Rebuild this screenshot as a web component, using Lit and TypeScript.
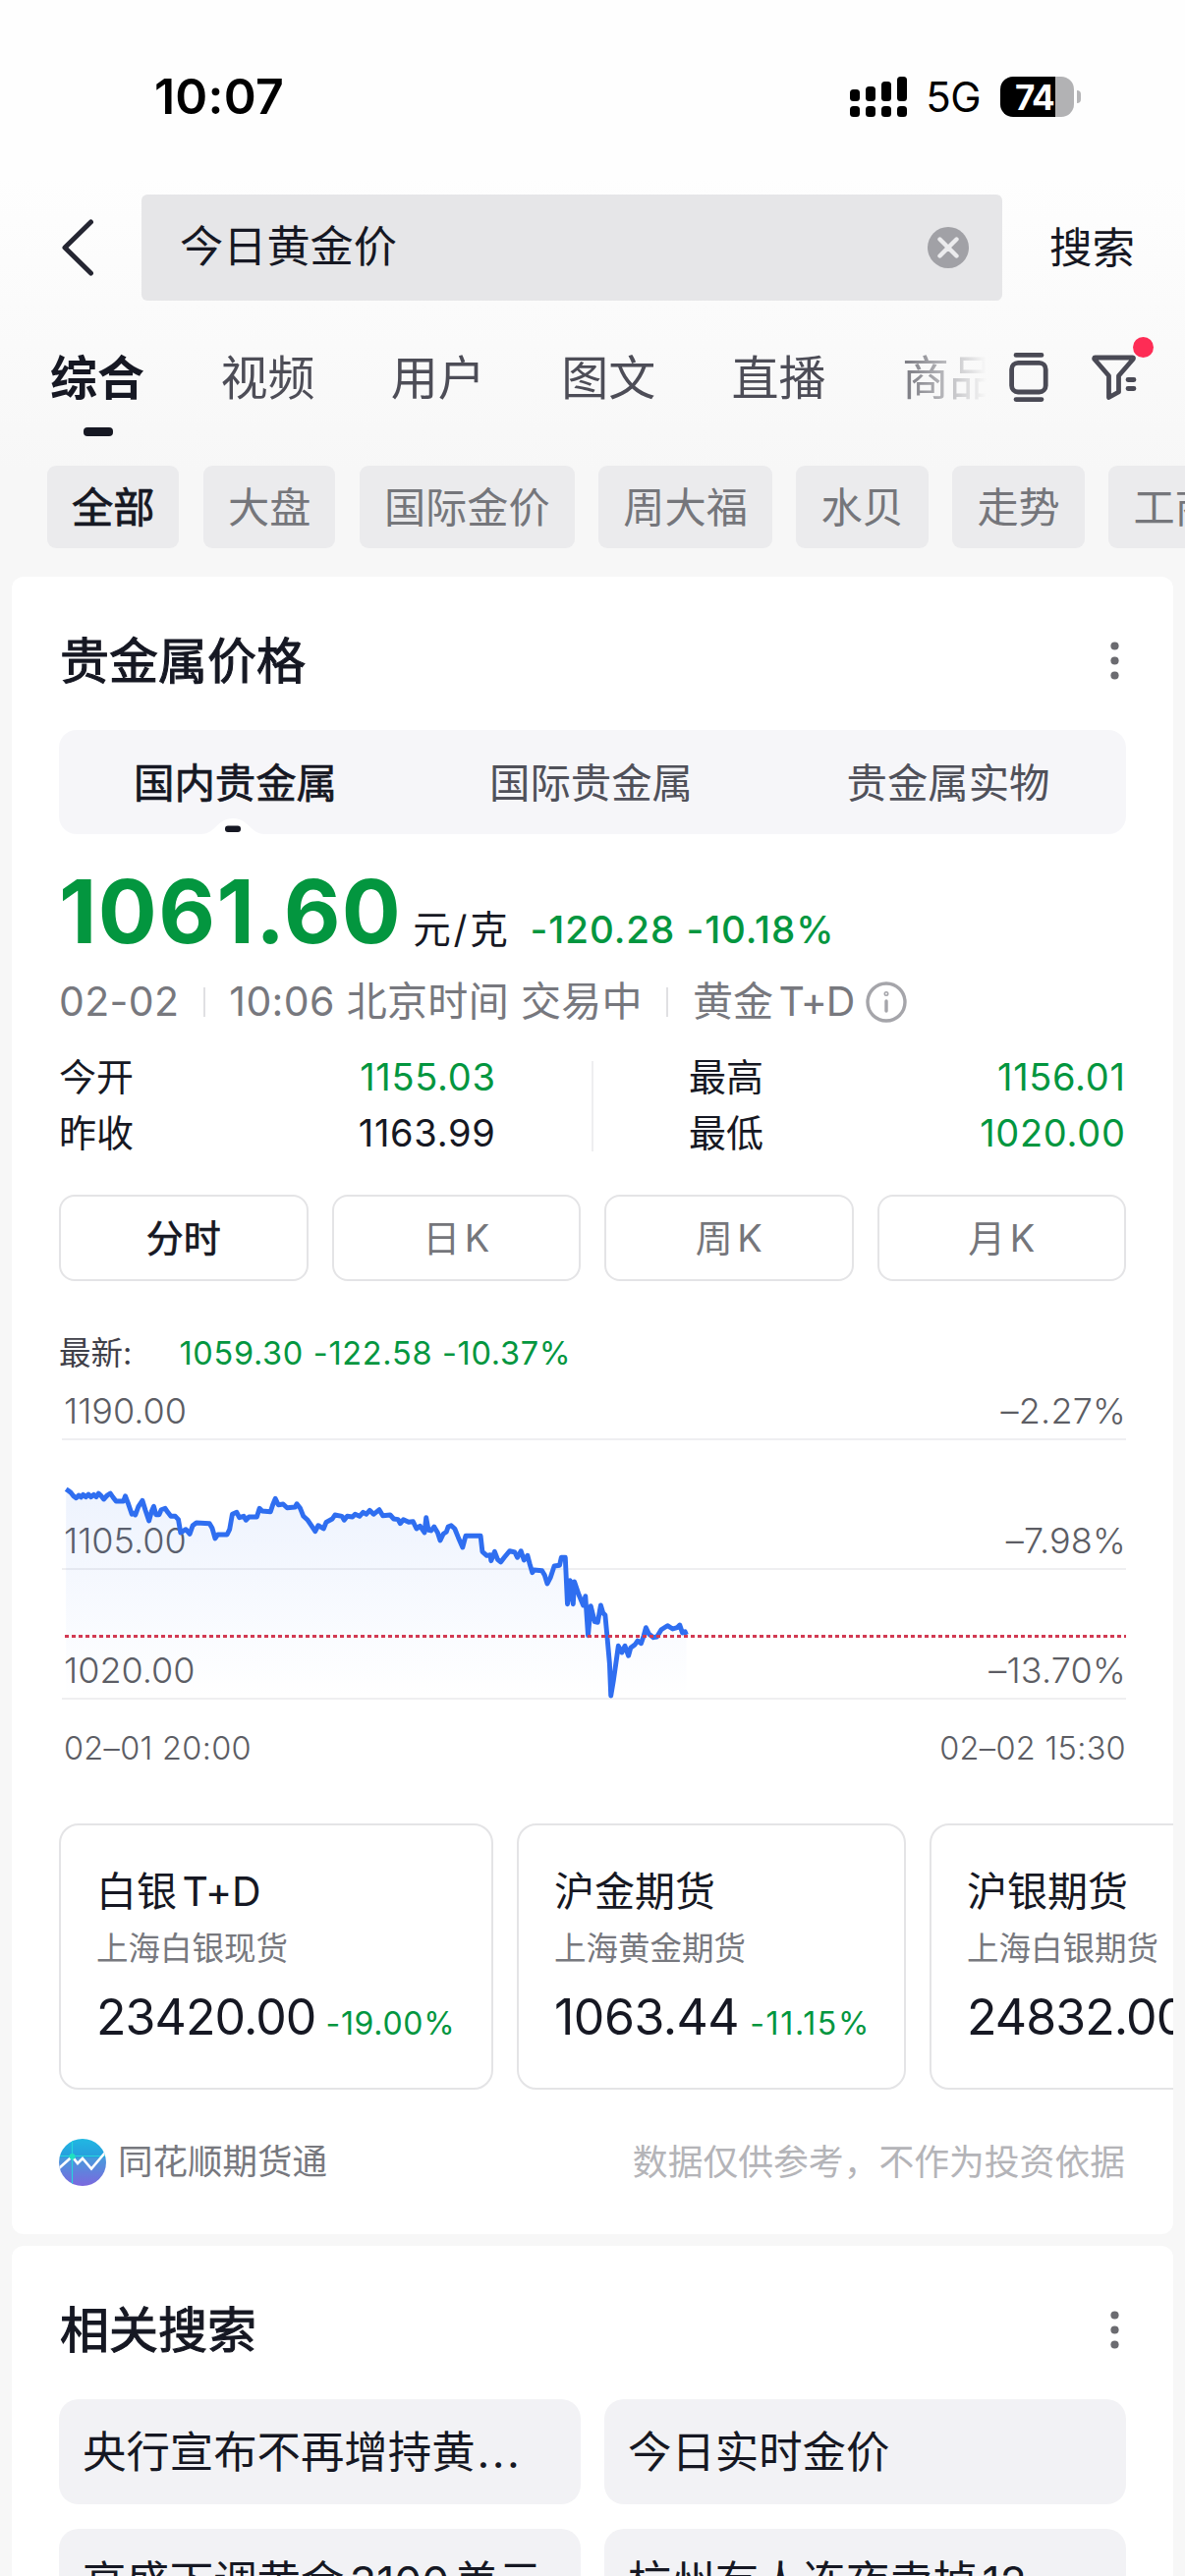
import { LitElement, html, css, svg } from "lit";
import { customElement, property } from "lit/decorators.js";
import { classMap } from "lit/directives/class-map.js";

const TABS = ["综合", "视频", "用户", "图文", "直播", "商品"];
const FILTERS = ["全部", "大盘", "国际金价", "周大福", "水贝", "走势", "工商银行"];
const METALS = ["国内贵金属", "国际贵金属", "贵金属实物"];
const PERIODS = ["分时", "日 K", "周 K", "月 K"];
const AXIS = [
  ["1190.00", "–2.27%"],
  ["1105.00", "–7.98%"],
  ["1020.00", "–13.70%"],
];
const FUTURES = [
  { name: "白银 T+D", sub: "上海白银现货", price: "23420.00", change: "-19.00%" },
  { name: "沪金期货", sub: "上海黄金期货", price: "1063.44", change: "-11.15%" },
  { name: "沪银期货", sub: "上海白银期货", price: "24832.00", change: "-16.00%" },
];
const RELATED = ["央行宣布不再增持黄", "今日实时金价", "高盛下调黄金 3100 美元", "杭州有人连夜卖掉 12"];

/* Minute series: pairs of time and value offsets, scaled to the plot below. */
const SERIES =
  "61,347 66,352 72,358 78,368 84,374 90,366 95,372 100,364 106,371 112,363 118,371 124,364 130,371 135,360 140,366 147,378 155,366 162,360 168,372 175,384 192,384 196,368 203,392 211,424 217,420 219,426 226,400 235,382 242,412 250,444 256,415 261,400 266,425 273,425 278,410 287,406 293,418 300,430 310,430 317,440 322,480 334,470 343,484 350,458 358,450 388,452 394,466 401,498 407,486 428,486 434,470 440,424 450,418 456,434 466,430 471,442 478,432 496,432 502,406 508,414 527,416 532,396 538,376 545,395 556,393 565,404 583,402 587,392 595,406 602,430 612,442 620,458 629,476 636,458 648,468 654,448 668,438 674,426 690,430 695,442 702,430 714,432 720,424 730,430 738,418 745,424 753,412 762,424 775,410 783,428 800,426 808,438 818,440 823,452 830,440 842,448 852,446 860,468 868,460 878,480 882,434 887,472 893,474 900,462 908,480 914,504 921,484 928,478 932,462 939,458 947,468 955,494 965,525 972,490 1006,490 1010,538 1020,550 1028,548 1030,566 1038,538 1045,562 1052,570 1060,556 1072,536 1084,540 1090,556 1098,536 1105,564 1113,550 1118,575 1124,602 1128,594 1146,596 1152,610 1158,636 1165,618 1174,582 1186,580 1190,556 1199,556 1204,698 1210,626 1217,698 1220,630 1230,670 1240,702 1245,674 1251,794 1257,704 1266,752 1273,754 1280,702 1285,725 1290,732 1294,790 1300,880 1303,978 1309,930 1314,884 1320,826 1328,846 1335,826 1343,856 1348,832 1358,822 1364,810 1372,818 1378,794 1383,770 1390,790 1400,800 1408,798 1418,776 1432,764 1444,774 1454,770 1460,762 1466,786 1472,782 1475,792";

const POINTS = SERIES.split(" ")
  .map((p) => {
    const [x, y] = p.split(",").map(Number);
    return `${(x / 2.24 - 20).toFixed(1)},${(y / 3 - 2).toFixed(1)}`;
  })
  .join(" ");

const base = css`
  * { box-sizing: border-box; }
  svg { display: block; flex: none; }
`;

@customElement("status-bar")
class StatusBar extends LitElement {
  static styles = [base, css`
    :host { display: flex; align-items: center; height: 196px; padding: 0 106px 0 157px; color: #000; }
    .time { flex: 1; font-size: 50px; font-weight: 600; letter-spacing: 0.2px; }
    .net { font-size: 42px; margin: 2px 20px 0 19px; letter-spacing: -0.5px; }
    .battery { width: 75px; height: 41px; border-radius: 13px; overflow: hidden; padding-left: 15px;
      background: linear-gradient(90deg, #000 56px, #b2b2b4 56px); color: #fff;
      font: 700 35px/42px Inter, sans-serif; letter-spacing: -1.2px; }
    .nub { width: 4px; height: 13px; margin-left: 3px; border-radius: 0 5px 5px 0; background: #b5b5b7; }
  `];
  render() {
    return html`
      <div class="time">10:07</div>
      <svg width="58" height="41" viewBox="0 0 58 41">
        ${[13, 10, 5, 0].map((t, i) => svg`
          <rect x=${i * 16} y=${t} width="10" height=${25 - t} rx="3.5"></rect>
          <rect x=${i * 16} y="30" width="10" height="11" rx="3.5"></rect>`)}
      </svg>
      <div class="net">5G</div>
      <div class="battery">74</div>
      <div class="nub"></div>`;
  }
}

@customElement("search-header")
class SearchHeader extends LitElement {
  static styles = [base, css`
    :host { display: block; color: #161823; }
    .search { display: flex; align-items: center; height: 108px; margin-top: 2px; padding-left: 60px; }
    .box { display: flex; align-items: center; justify-content: space-between; width: 876px; height: 108px;
      margin-left: 46px; padding: 0 34px 0 39px; border-radius: 6px; background: #e6e6e8; font-size: 44.2px; }
    .go { margin-left: 48px; font-size: 43.5px; }
    .tabs { display: flex; height: 168px; padding: 0 0 12px 51px; align-items: center; }
    .list { display: flex; gap: 77.4px; width: 955px; overflow: hidden;
      -webkit-mask-image: linear-gradient(90deg, #000 840px, transparent 953px);
      mask-image: linear-gradient(90deg, #000 840px, transparent 953px); }
    .tab { flex: none; width: 96px; height: 120px; font-size: 48px; line-height: 122px; color: #4d4d57; position: relative; white-space: nowrap; }
    .tab.on { font-weight: 700; color: #161823; }
    .tab.on::after { content: ""; position: absolute; left: 34px; bottom: 0; width: 30px; height: 9px; border-radius: 4px; background: #161823; }
    .icons { display: flex; align-items: center; gap: 44px; margin-left: 21px; }
    .filter { position: relative; }
    .filter::after { content: ""; position: absolute; left: 42px; top: -18px; width: 21px; height: 21px; border-radius: 50%; background: #fe2c55; }
    .chips { display: flex; gap: 24.6px; padding-left: 48px; overflow: hidden; }
    .chip { flex: none; height: 84px; padding: 0 25px; border-radius: 9px; background: #ebebed; color: #75767b;
      font-size: 42.2px; line-height: 85px; }
    .chip.on { color: #161823; -webkit-text-stroke: 0.8px #161823; }
  `];
  render() {
    return html`
      <div class="search">
        <svg width="38" height="64" viewBox="0 0 38 64" fill="none" stroke="#252632" stroke-width="5" stroke-linecap="round" stroke-linejoin="round">
          <path d="M32.5 6 L6 32 L32.5 58"></path>
        </svg>
        <div class="box">
          <span>今日黄金价</span>
          <svg width="42" height="42" viewBox="0 0 42 42">
            <circle cx="21" cy="21" r="21" fill="#a1a1a6"></circle>
            <path d="M12.5 12.5 L29.5 29.5 M29.5 12.5 L12.5 29.5" stroke="#ececee" stroke-width="4.4" stroke-linecap="round"></path>
          </svg>
        </div>
        <div class="go">搜索</div>
      </div>
      <div class="tabs">
        <div class="list">
          ${TABS.map((t, i) => html`<div class=${classMap({ tab: true, on: i === 0 })}>${t}</div>`)}
        </div>
        <div class="icons">
          <svg width="40" height="50" viewBox="0 0 40 50" fill="none" stroke="#4a4a55" stroke-width="4.8" stroke-linecap="round">
            <path d="M7 2.4 H33 M7 47.6 H33"></path>
            <rect x="2.6" y="10.4" width="34.6" height="29.6" rx="6.5"></rect>
          </svg>
          <div class="filter">
            <svg width="46" height="46" viewBox="0 0 46 46" fill="none" stroke="#4a4a55" stroke-width="4.8" stroke-linecap="round" stroke-linejoin="round">
              <path d="M3.5 3 H41.5 C42.8 3 42.6 4 42 4.8 L27.5 21.5 V38 L17.5 43.5 V21.5 L3 4.8 C2.4 4 2.6 3 3.5 3 Z"></path>
              <path d="M37 25.5 H43 M37 34.5 H43"></path>
            </svg>
          </div>
        </div>
      </div>
      <div class="chips">
        ${FILTERS.map((t, i) => html`<div class=${classMap({ chip: true, on: i === 0 })}>${t}</div>`)}
      </div>`;
  }
}

@customElement("card-title")
class CardTitle extends LitElement {
  @property() text = "";
  static styles = [base, css`
    :host { display: flex; align-items: center; justify-content: space-between; height: 156px; padding: 14px 7px 0 0;
      font-size: 50px; color: #161823; }
    .label { padding: 1px 0 0 1px; -webkit-text-stroke: 1.1px #161823; }
  `];
  render() {
    return html`<div class="label">${this.text}</div>
      <svg width="9" height="39" viewBox="0 0 9 39" fill="#6b6b70">
        <circle cx="4.5" cy="4.5" r="4.1"></circle><circle cx="4.5" cy="19.5" r="4.1"></circle><circle cx="4.5" cy="34.5" r="4.1"></circle>
      </svg>`;
  }
}

@customElement("price-chart")
class PriceChart extends LitElement {
  static styles = [base, css`
    :host { display: block; }
    .plot { position: relative; }
    .band { display: flex; justify-content: space-between; align-items: flex-end; height: 132px; margin-left: 3px;
      border-bottom: 2px solid #efeff1; font-size: 36px; line-height: 55px; font-weight: 300; color: #5c5d64; padding-left: 2px; }
    .band:first-child { height: 64px; }
    .pct { letter-spacing: 0.2px; }
    .line { position: absolute; left: 0; top: 0; }
    .dates { display: flex; justify-content: space-between; height: 48px; margin-top: 26px; padding-left: 5px;
      font-size: 32.5px; line-height: 48px; font-weight: 300; color: #5c5d64; letter-spacing: 0.3px; }
  `];
  render() {
    return html`
      <div class="plot">
        ${AXIS.map(([v, p]) => html`<div class="band"><span>${v}</span><span class="pct">${p}</span></div>`)}
        <svg class="line" width="1086" height="328" viewBox="0 0 1086 328" fill="none">
          <defs>
            <linearGradient id="fade" x1="0" y1="110" x2="0" y2="327" gradientUnits="userSpaceOnUse">
              <stop offset="0" stop-color="#2f6ff0" stop-opacity="0.085"></stop>
              <stop offset="1" stop-color="#2f6ff0" stop-opacity="0"></stop>
            </linearGradient>
          </defs>
          <polygon points="7,327 ${POINTS} 638.5,327" fill="url(#fade)"></polygon>
          <polyline points=${POINTS} stroke="#2f6ef0" stroke-width="4.9" stroke-linejoin="round"></polyline>
          <path d="M6 263.5 H1086" stroke="#d23a52" stroke-width="3" stroke-dasharray="4 3"></path>
        </svg>
      </div>
      <div class="dates"><span>02–01 20:00</span><span>02–02 15:30</span></div>`;
  }
}

@customElement("metal-card")
class MetalCard extends LitElement {
  static styles = [base, css`
    :host { display: block; height: 1687px; padding: 0 48px; background: #fff; border-radius: 12px; color: #161823; overflow: hidden; }
    .green { color: #03963f; }
    .segment { display: grid; grid-template-columns: repeat(3, 1fr); height: 106px; border-radius: 18px; background: #f6f6f9; overflow: hidden;
      text-align: center; font-size: 41.4px; line-height: 109px; color: #50515a; }
    .seg { position: relative; height: 106px; padding-right: 3px; }
    .seg:last-child { padding-right: 0; }
    .seg.on { color: #161823; -webkit-text-stroke: 0.7px #161823; }
    .notch { position: absolute; left: 145px; bottom: 0; -webkit-text-stroke: 0; }
    .price { display: flex; align-items: baseline; height: 108px; margin-top: 25px; line-height: 54px; white-space: nowrap; }
    .big { font-size: 89px; line-height: 108px; font-weight: 700; letter-spacing: 1.4px; }
    .unit { margin-left: 11px; font-size: 38.5px; letter-spacing: 2.8px; }
    .delta { margin-left: 20px; font-size: 38.5px; font-weight: 500; letter-spacing: 0.95px; }
    .info { display: flex; align-items: center; height: 60px; margin-top: 7px; padding-top: 1px; font-size: 41px; letter-spacing: 0.35px; color: #77787e; white-space: nowrap; }
    .info i { width: 2px; height: 30px; margin: 0 24.5px; background: #e0e0e3; }
    .info .tight { letter-spacing: 0; word-spacing: -6px; }
    .info .td { letter-spacing: -1.2px; }
    .info svg { margin-left: 12px; }
    .quotes { display: flex; margin-top: 19px; font-size: 38px; line-height: 57px; }
    .pair { flex: none; width: 444px; }
    .row { display: flex; justify-content: space-between; height: 57px; }
    .num { letter-spacing: 0.7px; margin-right: -0.6px; }
    .rule { width: 2px; height: 92px; margin: 12px 97px 0 98px; background: #eeeef0; }
    .periods { display: grid; grid-template-columns: repeat(4, 1fr); gap: 24px; margin-top: 34px; }
    .period { height: 88px; border: 2px solid #e4e4e6; border-radius: 16px; text-align: center; font-size: 38px; line-height: 85px; color: #75767b; word-spacing: -6px; }
    .period.on { color: #161823; -webkit-text-stroke: 0.7px #161823; }
    .latest { display: flex; gap: 48px; height: 48px; margin-top: 50px; line-height: 48px; font-size: 32.5px; color: #3f4049; }
    .latest .green { letter-spacing: 0.68px; }
    .futures { display: flex; gap: 24px; margin: 52px -48px 0 0; overflow: hidden; }
    .future { flex: none; width: 442px; height: 271px; padding: 37px 0 0 36px; border: 2px solid #e4e4e6; border-radius: 20px; white-space: nowrap; }
    .future:nth-child(2) { width: 396px; }
    .name { font-size: 41px; line-height: 60px; word-spacing: -6px; }
    .sub { font-size: 32.5px; line-height: 58px; color: #77787e; }
    .quote { display: flex; align-items: baseline; gap: 10px; margin-top: 2px; font-size: 50px; line-height: 76px; letter-spacing: -0.9px; }
    .pct { font-size: 32px; line-height: 40px; letter-spacing: 0.7px; }
    .future:nth-child(2) .quote { gap: 11px; letter-spacing: -0.5px; }
    .future:nth-child(2) .pct { letter-spacing: 1.7px; }
    .foot { display: flex; align-items: center; height: 48px; margin-top: 50px; font-size: 35.5px; color: #77787e; }
    .source { flex: 1; margin: 1px 0 0 12px; }
    .note { color: #b4b4b8; font-size: 35.8px; margin: 1px 1px 0 0; }
  `];
  render() {
    return html`
      <card-title text="贵金属价格"></card-title>
      <div class="segment">
        ${METALS.map((m, i) => html`<div class=${classMap({ seg: true, on: i === 0 })}>${m}${i === 0
          ? html`<svg class="notch" width="64" height="18" viewBox="0 0 64 18">
              <path d="M0 18 C14 18 16 2 32 2 C48 2 50 18 64 18 Z" fill="#fff"></path>
              <rect x="24" y="9.5" width="16" height="6.5" rx="3" fill="#161823"></rect>
            </svg>` : ""}</div>`)}
      </div>
      <div class="price">
        <span class="big green">1061.60</span><span class="unit">元/克</span><span class="delta green">-120.28 -10.18%</span>
      </div>
      <div class="info">
        <span>02-02</span><i></i><span>10:06 北京时间 交易中</span><i></i><span class="tight">黄金 <span class="td">T+D</span></span>
        <svg width="42" height="42" viewBox="0 0 42 42" fill="none" stroke="#a5a5aa" stroke-width="3.4" stroke-linecap="round">
          <circle cx="21" cy="21" r="19"></circle><path d="M21 20 V30"></path><circle cx="21" cy="12.5" r="0.8"></circle>
        </svg>
      </div>
      <div class="quotes">
        <div class="pair">
          <div class="row"><span>今开</span><span class="num green">1155.03</span></div>
          <div class="row"><span>昨收</span><span class="num">1163.99</span></div>
        </div>
        <div class="rule"></div>
        <div class="pair">
          <div class="row"><span>最高</span><span class="num green">1156.01</span></div>
          <div class="row"><span>最低</span><span class="num green">1020.00</span></div>
        </div>
      </div>
      <div class="periods">
        ${PERIODS.map((p, i) => html`<div class=${classMap({ period: true, on: i === 0 })}>${p}</div>`)}
      </div>
      <div class="latest"><span>最新:</span><span class="green">1059.30 -122.58 -10.37%</span></div>
      <price-chart></price-chart>
      <div class="futures">
        ${FUTURES.map((f) => html`<div class="future">
          <div class="name">${f.name}</div>
          <div class="sub">${f.sub}</div>
          <div class="quote"><span>${f.price}</span><span class="pct green">${f.change}</span></div>
        </div>`)}
      </div>
      <div class="foot">
        <svg width="48" height="48" viewBox="0 0 48 48">
          <defs>
            <linearGradient id="sky" x1="0" y1="0" x2="0" y2="1">
              <stop offset="0" stop-color="#21b8e2"></stop><stop offset="0.38" stop-color="#279ddd"></stop>
              <stop offset="0.42" stop-color="#4a98dc"></stop><stop offset="1" stop-color="#7b68de"></stop>
            </linearGradient>
            <clipPath id="disc"><circle cx="24" cy="24" r="24"></circle></clipPath>
          </defs>
          <g clip-path="url(#disc)" fill="none">
            <rect width="48" height="48" fill="url(#sky)"></rect>
            <path d="M13.5 0 V48 M0 17.5 H48" stroke="#26d5dc" stroke-width="1.2"></path>
            <path d="M0 30 L13.5 18 L19 25 L24 20 L33 30.5 L47 14" stroke="#fff" stroke-width="2.6"></path>
            <circle cx="13.5" cy="18" r="3" fill="#1fe0c0"></circle>
          </g>
        </svg>
        <span class="source">同花顺期货通</span>
        <span class="note">数据仅供参考，不作为投资依据</span>
      </div>`;
  }
}

@customElement("related-card")
class RelatedCard extends LitElement {
  static styles = [base, css`
    :host { display: block; height: 500px; padding: 0 48px; background: #fff; border-radius: 12px; color: #161823; }
    .grid { display: grid; grid-template-columns: repeat(2, 531px); gap: 25px 24px; }
    .item { height: 107px; padding-left: 24px; border-radius: 20px; background: #f2f2f5; font-size: 44.4px; line-height: 109px; white-space: nowrap; overflow: hidden; word-spacing: -7px; }
    .more { letter-spacing: 2.5px; margin-left: 2px; }
  `];
  render() {
    return html`
      <card-title text="相关搜索"></card-title>
      <div class="grid">
        ${RELATED.map((r, i) => html`<div class="item">${r}${i % 3 === 0 ? html`<span class="more">...</span>` : ""}</div>`)}
      </div>`;
  }
}

@customElement("app-root")
class AppRoot extends LitElement {
  static styles = [base, css`
    :host { display: block; width: 1206px; height: 2622px; overflow: hidden;
      background: linear-gradient(#fefefe 180px, #f7f7f7 480px);
      font-family: Inter, "Noto Sans CJK SC", sans-serif; font-feature-settings: "calt" 0; line-height: 1.2; }
    .body { display: flex; flex-direction: column; gap: 12px; padding: 29px 12px 0; }
  `];
  render() {
    return html`
      <status-bar></status-bar>
      <search-header></search-header>
      <div class="body"><metal-card></metal-card><related-card></related-card></div>`;
  }
}
